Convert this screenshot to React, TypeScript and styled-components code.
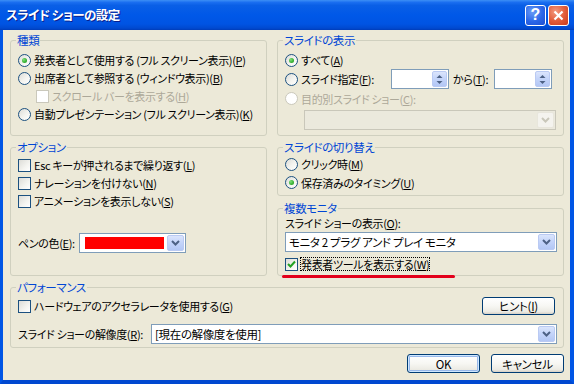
import React from "react";
import styled, { createGlobalStyle, css } from "styled-components";

const GlobalStyle = createGlobalStyle`
	html, body {
		margin: 0;
		padding: 0;
		background: #ece9d8;
	}
	body {
		font-family: "Noto Sans CJK JP", "Noto Sans", sans-serif;
		font-size: 11px;
		letter-spacing: -0.35px;
		font-feature-settings: "palt";
		color: #000;
	}
	* {
		box-sizing: border-box;
	}
`;

const ComboArrow = ({ disabled }: { disabled?: boolean }) => (
	<DropButton $disabled={disabled}>
		<svg width="9" height="6" viewBox="0 0 9 6">
			<path
				d="M1 1 L4.5 4.5 L8 1"
				fill="none"
				stroke={disabled ? "#c9c7ba" : "#4d6185"}
				strokeWidth="2"
			/>
		</svg>
	</DropButton>
);

const Spin = () => (
	<SpinBox>
		<SpinButton>
			<svg width="7" height="11" viewBox="0 0 7 11">
				<path d="M0.5 4 L3.5 1 L6.5 4 Z" fill="#4d6185" />
				<path d="M0.5 7 L3.5 10 L6.5 7 Z" fill="#4d6185" />
			</svg>
		</SpinButton>
	</SpinBox>
);

const Radio = ({ checked, disabled }: { checked?: boolean; disabled?: boolean }) => (
	<RadioCircle $disabled={disabled}>{checked && <RadioDot />}</RadioCircle>
);

const Check = ({ checked, disabled }: { checked?: boolean; disabled?: boolean }) => (
	<CheckBox $disabled={disabled}>
		{checked && (
			<svg width="9" height="9" viewBox="0 0 9 9">
				<path d="M1 4 L3.5 6.5 L8 1.5" fill="none" stroke="#21a121" strokeWidth="2" />
			</svg>
		)}
	</CheckBox>
);

const App = () => {
	return (
		<>
			<GlobalStyle />
			<Window>
				<TitleBar>
					<TitleText>スライド ショーの設定</TitleText>
					<CaptionButtons>
						<CaptionButton $kind="help">?</CaptionButton>
						<CaptionButton $kind="close">
							<svg width="11" height="11" viewBox="0 0 11 11">
								<path d="M1.5 1.5 L9.5 9.5 M9.5 1.5 L1.5 9.5" stroke="#fff" strokeWidth="2.2" />
							</svg>
						</CaptionButton>
					</CaptionButtons>
				</TitleBar>
				<Client>
					<Columns>
						<LeftColumn>
							<Group $h={102}>
								<Legend>種類</Legend>
								<Rows $pt={4}>
									<Row>
										<Radio checked />
										<Label>発表者として使用する (フル スクリーン表示)(<u>P</u>)</Label>
									</Row>
									<Row>
										<Radio />
										<Label>出席者として参照する (ウィンドウ表示)(<u>B</u>)</Label>
									</Row>
									<Row $indent={18}>
										<Check disabled />
										<Label $disabled>スクロール バーを表示する(<u>H</u>)</Label>
									</Row>
									<Row>
										<Radio />
										<Label>自動プレゼンテーション (フル スクリーン表示)(<u>K</u>)</Label>
									</Row>
								</Rows>
							</Group>
							<Group $grow>
								<Legend>オプション</Legend>
								<Rows $pt={2}>
									<Row>
										<Check />
										<Label>Esc キーが押されるまで繰り返す(<u>L</u>)</Label>
									</Row>
									<Row>
										<Check />
										<Label>ナレーションを付けない(<u>N</u>)</Label>
									</Row>
									<Row>
										<Check />
										<Label>アニメーションを表示しない(<u>S</u>)</Label>
									</Row>
									<PenRow>
										<PlainLabel>ペンの色(<u>E</u>):</PlainLabel>
										<Combo $w={107}>
											<PenSwatch />
											<ComboArrow />
										</Combo>
									</PenRow>
								</Rows>
							</Group>
						</LeftColumn>
						<RightColumn>
							<Group $h={102}>
								<Legend>スライドの表示</Legend>
								<Rows $pt={4}>
									<Row>
										<Radio checked />
										<Label>すべて(<u>A</u>)</Label>
									</Row>
									<Row $h={20}>
										<RadioCell>
											<Radio />
											<Label>スライド指定(<u>F</u>):</Label>
										</RadioCell>
										<Spin />
										<FromLabel>から(<u>T</u>):</FromLabel>
										<Spin />
									</Row>
									<Row $h={19}>
										<Radio disabled />
										<Label $disabled>目的別スライド ショー(<u>C</u>):</Label>
									</Row>
									<ComboRow $indent={19} $mt={2}>
										<Combo $w={252} $disabled>
											<ComboText />
											<ComboArrow disabled />
										</Combo>
									</ComboRow>
								</Rows>
							</Group>
							<Group $h={55}>
								<Legend>スライドの切り替え</Legend>
								<Rows $pt={1}>
									<Row $h={18}>
										<Radio />
										<Label>クリック時(<u>M</u>)</Label>
									</Row>
									<Row $h={19}>
										<Radio checked />
										<Label>保存済みのタイミング(<u>U</u>)</Label>
									</Row>
								</Rows>
							</Group>
							<Group $grow $mt={1}>
								<Legend>複数モニタ</Legend>
								<Rows $pt={2}>
									<Row $h={13}>
										<PlainLabel>スライド ショーの表示(<u>O</u>):</PlainLabel>
									</Row>
									<ComboRow $mt={2}>
										<Combo $w={272}>
											<ComboText>モニタ 2 プラグ アンド プレイ モニタ</ComboText>
											<ComboArrow />
										</Combo>
									</ComboRow>
									<Row $h={16} $mt={4}>
										<Check checked />
										<FocusLabel>
											発表者ツールを表示する(<u>W</u>)
											<RedMark />
										</FocusLabel>
									</Row>
								</Rows>
							</Group>
						</RightColumn>
					</Columns>
					<Group $h={67} $mt={5}>
						<Legend>パフォーマンス</Legend>
						<Rows $pt={1}>
							<Row $h={22}>
								<Check />
								<Label>ハードウェアのアクセラレータを使用する(<u>G</u>)</Label>
								<PushButton $w={73} $h={18} $push>
									ヒント(<u>I</u>)
								</PushButton>
							</Row>
							<ComboRow $mt={7}>
								<PlainLabel>スライド ショーの解像度(<u>R</u>):</PlainLabel>
								<Combo $w={406} $push>
									<ComboText>[現在の解像度を使用]</ComboText>
									<ComboArrow />
								</Combo>
							</ComboRow>
						</Rows>
					</Group>
					<ButtonRow>
						<PushButton $w={73} $h={19} $default>
							OK
						</PushButton>
						<PushButton $w={73} $h={19}>
							キャンセル
						</PushButton>
					</ButtonRow>
				</Client>
			</Window>
		</>
	);
};

export default App;

const Window = styled.div`
	width: 574px;
	height: 384px;
	display: flex;
	flex-direction: column;
	overflow: hidden;
`;

const TitleBar = styled.div`
	height: 30px;
	flex: none;
	display: flex;
	align-items: center;
	justify-content: space-between;
	padding: 0 5px 1px 6px;
	background: linear-gradient(
		to bottom,
		#3d8ff5 0%,
		#1a6ef0 8%,
		#0a5fe6 18%,
		#0058e8 50%,
		#0054e3 80%,
		#0049d0 94%,
		#003cb8 100%
	);
`;

const TitleText = styled.span`
	color: #fff;
	font-weight: bold;
	font-size: 12.5px;
	letter-spacing: -0.5px;
	text-shadow: 1px 1px 0 #0a1e8c;
`;

const CaptionButtons = styled.div`
	display: flex;
	gap: 2px;
	margin-top: 1px;
`;

const CaptionButton = styled.div<{ $kind: "help" | "close" }>`
	width: 21px;
	height: 21px;
	border: 1px solid #fff;
	border-radius: 3px;
	display: flex;
	align-items: center;
	justify-content: center;
	color: #fff;
	font-family: "Liberation Sans", sans-serif;
	font-weight: bold;
	font-size: 16px;
	letter-spacing: 0;
	${(p) =>
		p.$kind === "help"
			? css`
					background: radial-gradient(circle at 35% 30%, #6a9cf6 0%, #2a66e8 55%, #1f4fd0 100%);
				`
			: css`
					background: radial-gradient(circle at 35% 30%, #f49a80 0%, #e25e3c 50%, #c9391b 100%);
				`}
`;

const Client = styled.div`
	flex: 1;
	display: flex;
	flex-direction: column;
	background: #ece9d8;
	border-left: 3px solid #0055e5;
	border-right: 4px solid #0055e5;
	border-bottom: 4px solid #0048d0;
	padding: 4px 6px 7px 7px;
`;

const Columns = styled.div`
	display: flex;
	gap: 10px;
	height: 242px;
	flex: none;
`;

const LeftColumn = styled.div`
	width: 258px;
	display: flex;
	flex-direction: column;
	gap: 5px;
`;

const RightColumn = styled.div`
	flex: 1;
	display: flex;
	flex-direction: column;
	gap: 5px;
`;

const Group = styled.fieldset<{ $h?: number; $grow?: boolean; $mt?: number }>`
	margin: ${(p) => p.$mt ?? 0}px 0 0 0;
	padding: 0 6px 0 7px;
	border: 1px solid #d0d0bf;
	border-radius: 3px;
	min-width: 0;
	${(p) => p.$h && `height: ${p.$h}px; flex: none;`}
	${(p) => p.$grow && `flex: 1;`}
`;

const Legend = styled.legend`
	padding: 0 1px;
	margin-left: -2px;
	font-size: 11.5px;
	line-height: 13px;
	color: #0046d5;
`;

const Rows = styled.div<{ $pt: number }>`
	display: flex;
	flex-direction: column;
	padding-top: ${(p) => p.$pt}px;
`;

const Row = styled.div<{ $h?: number; $indent?: number; $mt?: number }>`
	display: flex;
	align-items: center;
	height: ${(p) => p.$h ?? 18}px;
	line-height: ${(p) => Math.min(p.$h ?? 18, 14)}px;
	padding-left: ${(p) => p.$indent ?? 0}px;
	margin-top: ${(p) => p.$mt ?? 0}px;
	white-space: nowrap;
`;

const ComboRow = styled.div<{ $indent?: number; $mt?: number }>`
	display: flex;
	align-items: center;
	line-height: 14px;
	padding-left: ${(p) => p.$indent ?? 0}px;
	margin-top: ${(p) => p.$mt ?? 0}px;
	white-space: nowrap;
`;

const PenRow = styled.div`
	display: flex;
	align-items: center;
	line-height: 14px;
	margin-top: 23px;
	white-space: nowrap;
`;

const RadioCell = styled.div`
	display: flex;
	align-items: center;
	width: 106px;
`;

const Label = styled.span<{ $disabled?: boolean }>`
	margin-left: 3px;
	color: ${(p) => (p.$disabled ? "#aca899" : "#000")};
`;

const PlainLabel = styled.span`
	margin-right: 4px;
`;

const FromLabel = styled.span`
	width: 45px;
	padding-left: 4px;
`;

const FocusLabel = styled.span`
	position: relative;
	margin-left: 2px;
	padding: 0 1px;
	outline: 1px dotted #000;
	outline-offset: -1px;
`;

const RedMark = styled.span`
	position: absolute;
	left: -18px;
	width: 173px;
	bottom: -7px;
	height: 3px;
	border-radius: 2px;
	background: #e3001b;
`;

const RadioCircle = styled.span<{ $disabled?: boolean }>`
	width: 13px;
	height: 13px;
	flex: none;
	border-radius: 50%;
	border: 1px solid ${(p) => (p.$disabled ? "#cac8bb" : "#1c5180")};
	background: ${(p) =>
		p.$disabled ? "#fff" : "linear-gradient(135deg, #dcdcd7 0%, #f4f4f0 55%, #fff 100%)"};
	display: flex;
	align-items: center;
	justify-content: center;
`;

const RadioDot = styled.span`
	width: 5px;
	height: 5px;
	border-radius: 50%;
	background: radial-gradient(circle at 35% 35%, #7fe07a 0%, #36b032 60%, #1f8f1c 100%);
`;

const CheckBox = styled.span<{ $disabled?: boolean }>`
	width: 13px;
	height: 13px;
	flex: none;
	border: 1px solid ${(p) => (p.$disabled ? "#cac8bb" : "#1c5180")};
	background: ${(p) =>
		p.$disabled ? "#fff" : "linear-gradient(135deg, #dcdcd7 0%, #f4f4f0 60%, #fff 100%)"};
	display: flex;
	align-items: center;
	justify-content: center;
`;

const Combo = styled.div<{ $w: number; $disabled?: boolean; $push?: boolean }>`
	width: ${(p) => p.$w}px;
	height: 20px;
	flex: none;
	display: flex;
	align-items: stretch;
	padding: 1px;
	border: 1px solid ${(p) => (p.$disabled ? "#c9c7ba" : "#7f9db9")};
	background: ${(p) => (p.$disabled ? "#ebe9dd" : "#fff")};
	${(p) => p.$push && `margin-left: auto;`}
`;

const ComboText = styled.span`
	flex: 1;
	padding-left: 2px;
	font-size: 11.5px;
	line-height: 16px;
	overflow: hidden;
`;

const PenSwatch = styled.span`
	width: 82px;
	margin: 2px 3px 2px 4px;
	background: #ff0000;
`;

const DropButton = styled.span<{ $disabled?: boolean }>`
	width: 17px;
	margin-left: auto;
	border-radius: 2px;
	display: flex;
	align-items: center;
	justify-content: center;
	${(p) =>
		p.$disabled
			? css`
					background: #f4f3ee;
					border: 1px solid #e8e6dc;
				`
			: css`
					background: linear-gradient(to bottom, #dbe5fc 0%, #c5d5fa 45%, #b3c7f5 100%);
					border: 1px solid #bacaf3;
				`}
`;

const SpinBox = styled.div`
	width: 58px;
	height: 20px;
	flex: none;
	display: flex;
	justify-content: flex-end;
	padding: 1px;
	border: 1px solid #7f9db9;
	background: #fff;
`;

const SpinButton = styled.span`
	width: 15px;
	border-radius: 2px;
	display: flex;
	align-items: center;
	justify-content: center;
	background: linear-gradient(to bottom, #dbe5fc 0%, #c5d5fa 45%, #b3c7f5 100%);
	border: 1px solid #bacaf3;
`;

const PushButton = styled.button<{ $w: number; $h: number; $default?: boolean; $push?: boolean }>`
	width: ${(p) => p.$w}px;
	height: ${(p) => p.$h}px;
	padding: 0;
	font-family: inherit;
	font-size: 11.5px;
	line-height: 14px;
	letter-spacing: -0.3px;
	font-feature-settings: "palt";
	color: #000;
	border: 1px solid #003c74;
	border-radius: 3px;
	background: linear-gradient(to bottom, #ffffff 0%, #f7f7f3 50%, #ecebe4 85%, #d6d0c5 100%);
	${(p) =>
		p.$default &&
		css`
			box-shadow: inset 0 0 0 1px #cee7ff, inset 0 0 0 2px #98b8ea;
		`}
	${(p) => p.$push && `margin-left: auto; margin-right: 2px;`}
`;

const ButtonRow = styled.div`
	display: flex;
	justify-content: flex-end;
	gap: 11px;
	margin-top: 6px;
`;
